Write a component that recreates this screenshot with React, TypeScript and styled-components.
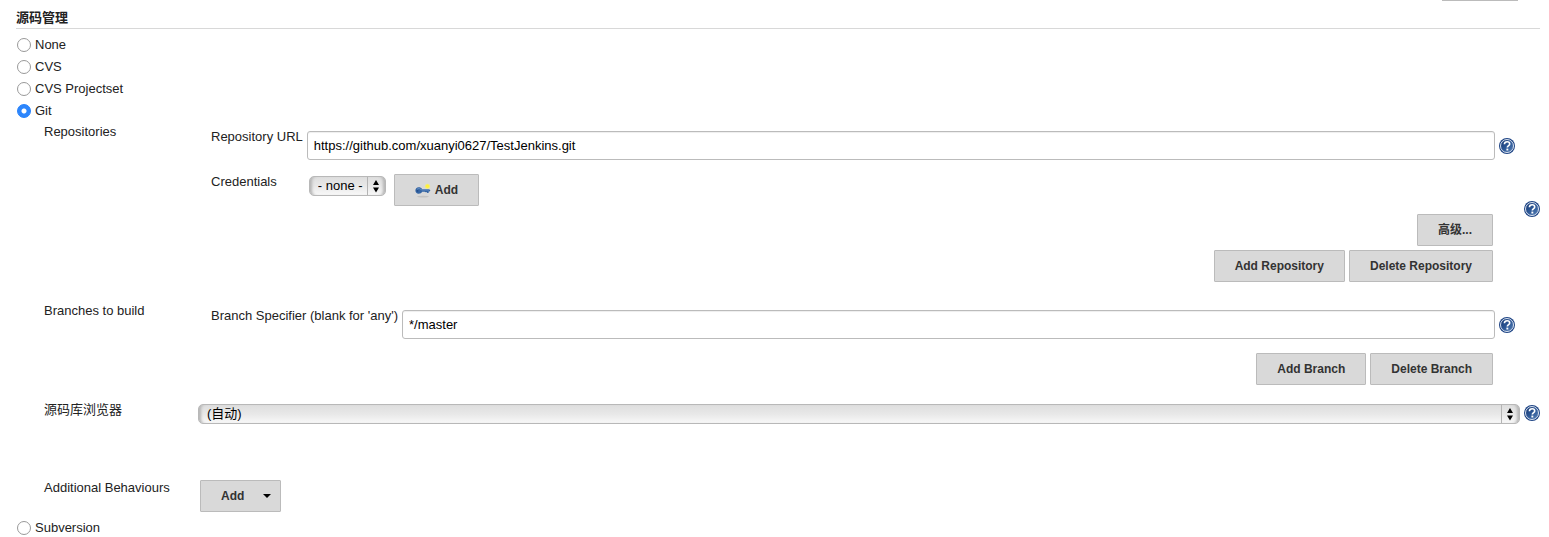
import React, { useId, useState } from "react";
import styled, { createGlobalStyle } from "styled-components";

const GlobalStyle = createGlobalStyle`
  *, *::before, *::after { box-sizing: border-box; }
  body {
    margin: 0;
    background: #fff;
    color: #222;
    font-family: "Liberation Sans", "Noto Sans CJK SC", sans-serif;
    font-size: 13px;
    line-height: 16px;
  }
  button, input, select { font: inherit; margin: 0; }
`;

const Page = styled.main`
  padding: 0 9px 0 16px;
`;

const PreviousSection = styled.div`
  display: flex;
  justify-content: flex-end;
  padding-right: 22px;
`;

const PreviousEdge = styled.div`
  width: 76px;
  height: 1px;
  background: #bbb;
`;

const SectionTitle = styled.h2`
  margin: 0 0 8px;
  padding: 9px 0 2px;
  border-bottom: 1px solid #d8d8d8;
  font-size: 13px;
  line-height: 16px;
  font-weight: 700;
`;

const RadioList = styled.div`
  display: flex;
  flex-direction: column;
  gap: 6px;
`;

const RadioRow = styled.label`
  display: flex;
  align-items: center;
  gap: 4px;
  height: 16px;
  padding-left: 1px;
`;

const Radio = styled.input`
  appearance: none;
  width: 14px;
  height: 14px;
  border: 1px solid #999;
  border-radius: 50%;
  background: #fff;
  &:checked {
    border-color: #2380fb;
    background: radial-gradient(circle, #fff 2px, #2d86fc 3px);
  }
`;

const Settings = styled.div`
  display: flex;
  flex-direction: column;
  padding: 5px 0 8px 28px;
`;

const Setting = styled.section<{ $space?: number }>`
  display: grid;
  grid-template-columns: 154px minmax(0, 1fr) 16px;
  margin-bottom: ${(p) => p.$space ?? 0}px;
`;

const SettingHelp = styled.div`
  grid-column: 3;
  align-self: center;
  display: flex;
`;

const Panel = styled.div<{ $bottom?: number }>`
  padding: 5px 9px ${(p) => p.$bottom ?? 0}px 13px;
`;

const Content = styled.div<{ $top?: number; $left?: number }>`
  padding: ${(p) => p.$top ?? 0}px 4px 0 ${(p) => p.$left ?? 0}px;
`;

const Fields = styled.div`
  display: grid;
  grid-template-columns: max-content minmax(0, 1fr) 16px;
  row-gap: 14px;
`;

const FieldLabel = styled.label`
  padding-right: 4px;
`;

const TextInput = styled.input`
  width: 100%;
  height: 29px;
  padding: 0 6px;
  border: 1px solid #bbb;
  border-radius: 3px;
  background: #fff;
  color: #000;
  box-shadow: inset 0 1px 1px #eee;
`;

const Control = styled.div`
  padding: 2px 4px 0 0;
`;

const FieldHelp = styled.div`
  display: flex;
  padding-top: 9px;
`;

const Inline = styled.div`
  display: flex;
  align-items: flex-start;
  gap: 8px;
  padding-left: 2px;
`;

const Buttons = styled.div<{ $top: number }>`
  display: flex;
  justify-content: flex-end;
  gap: 4px;
  padding: ${(p) => p.$top}px 22px 0 0;
`;

const Button = styled.button<{ $menu?: boolean }>`
  display: inline-flex;
  align-items: center;
  justify-content: center;
  gap: ${(p) => (p.$menu ? 19 : 4)}px;
  height: 32px;
  padding: 0 ${(p) => (p.$menu ? 9 : 20)}px 0 20px;
  border: 1px solid #bbb;
  border-radius: 1px;
  background: #d9d9d9;
  color: #333;
  font-size: 12px;
  font-weight: 700;
  white-space: nowrap;
`;

const SelectBox = styled.div<{ $fit?: boolean; $top: number }>`
  position: relative;
  width: ${(p) => (p.$fit ? "77px" : "auto")};
  margin-top: ${(p) => p.$top}px;
`;

const Select = styled.select`
  appearance: none;
  display: block;
  width: 100%;
  height: 20px;
  padding: 0 20px 0 8px;
  border: 1px solid #b8b8b8;
  border-radius: 5px;
  background: linear-gradient(#dedede, #e8e8e8 50%, #f8f8f8);
  box-shadow: inset 4px 0 3px -2px #b4b4b4, inset -4px 0 3px -2px #b4b4b4;
  color: #000;
`;

const SelectArrows = styled.svg`
  position: absolute;
  top: 1px;
  right: 0;
  pointer-events: none;
`;

function Choose({ id, options, fit, top }: { id: string; options: string[]; fit?: boolean; top: number }) {
  return (
    <SelectBox $fit={fit} $top={top}>
      <Select id={id}>
        {options.map((o) => (
          <option key={o}>{o}</option>
        ))}
      </Select>
      <SelectArrows width="19" height="18" viewBox="0 0 19 18" aria-hidden="true">
        <path d="M0.5 0V18" stroke="#b4b4b4" />
        <path d="M6 8L9 3L12 8ZM6 10.500L9 15.500L12 10.500Z" fill="#000" />
      </SelectArrows>
    </SelectBox>
  );
}

const HelpLink = styled.a`
  display: block;
  width: 16px;
  height: 16px;
`;

function Help() {
  const gradient = useId();
  return (
    <HelpLink href="#help" aria-label="Help">
      <svg width="16" height="16" viewBox="0 0 16 16" aria-hidden="true">
        <defs>
          <linearGradient id={gradient} x1="0" y1="0" x2="1" y2="1">
            <stop offset="0" stopColor="#16366f" />
            <stop offset="0.5" stopColor="#2c5796" />
            <stop offset="1" stopColor="#5b83b8" />
          </linearGradient>
        </defs>
        <circle cx="8" cy="8" r="8" fill="#1f4585" />
        <circle cx="8" cy="8" r="6.500" fill={`url(#${gradient})`} stroke="#eef3fa" strokeWidth="0.900" />
        <path d="M5.400 6.200C5.500 4.500 6.600 3.700 8.100 3.700C9.700 3.700 10.700 4.500 10.700 5.900C10.700 7.600 8.300 7.500 8.300 9.600" fill="none" stroke="#fff" strokeWidth="1.600" />
        <rect x="7.400" y="10.600" width="1.900" height="1.900" fill="#fff" />
      </svg>
    </HelpLink>
  );
}

function KeyIcon() {
  return (
    <svg width="16" height="16" viewBox="0 0 16 16" aria-hidden="true">
      <ellipse cx="8" cy="14.600" rx="6" ry="0.800" fill="#c2c2c2" />
      <circle cx="12.500" cy="4.300" r="2.600" fill="#efe98a" />
      <circle cx="12.500" cy="4.300" r="1.700" fill="#fff23c" />
      <path d="M3.600 5.300C5.200 5.300 6.500 5.900 7.200 7.200H14L15.400 8.300L14.600 9.600H13.600V11H12.300L11.500 9.900L10.600 10.300L9.800 9.700H7.200C6.600 11 5.300 11.700 3.600 11.700C1.700 11.700 0.400 10.300 0.400 8.500C0.400 6.700 1.700 5.300 3.600 5.300Z" fill="#3465a4" />
      <path d="M2 7.300C3 6.100 5.500 6.300 6.500 8H14" fill="none" stroke="#6d96c8" strokeWidth="0.800" />
      <circle cx="2.500" cy="8.800" r="0.900" fill="#204a87" />
    </svg>
  );
}

function App() {
  const [scm, setScm] = useState("Git");
  const option = (name: string) => (
    <RadioRow key={name}>
      <Radio type="radio" name="scm" value={name} checked={scm === name} onChange={() => setScm(name)} />
      {name}
    </RadioRow>
  );

  return (
    <>
      <GlobalStyle />
      <Page>
        <PreviousSection>
          <PreviousEdge />
        </PreviousSection>
        <SectionTitle>源码管理</SectionTitle>
        <RadioList>{["None", "CVS", "CVS Projectset", "Git"].map(option)}</RadioList>

        <Settings>
          <Setting $space={10}>
            <span>Repositories</span>
            <Panel $bottom={11}>
              <Fields>
                <FieldLabel htmlFor="url">Repository URL</FieldLabel>
                <Control>
                  <TextInput id="url" type="text" defaultValue="https://github.com/xuanyi0627/TestJenkins.git" />
                </Control>
                <FieldHelp>
                  <Help />
                </FieldHelp>
                <FieldLabel htmlFor="credentials">Credentials</FieldLabel>
                <Inline>
                  <Choose id="credentials" options={["- none -"]} fit top={2} />
                  <Button type="button">
                    <KeyIcon />
                    Add
                  </Button>
                </Inline>
              </Fields>
              <Buttons $top={8}>
                <Button type="button">高级...</Button>
              </Buttons>
              <Buttons $top={4}>
                <Button type="button">Add Repository</Button>
                <Button type="button">Delete Repository</Button>
              </Buttons>
            </Panel>
            <SettingHelp>
              <Help />
            </SettingHelp>
          </Setting>

          <Setting $space={17}>
            <span>Branches to build</span>
            <Panel>
              <Fields>
                <FieldLabel htmlFor="branch">Branch Specifier (blank for 'any')</FieldLabel>
                <Control>
                  <TextInput id="branch" type="text" defaultValue="*/master" />
                </Control>
                <FieldHelp>
                  <Help />
                </FieldHelp>
              </Fields>
              <Buttons $top={14}>
                <Button type="button">Add Branch</Button>
                <Button type="button">Delete Branch</Button>
              </Buttons>
            </Panel>
          </Setting>

          <Setting $space={56}>
            <label htmlFor="browser">源码库浏览器</label>
            <Content $top={2}>
              <Choose id="browser" options={["(自动)"]} top={0} />
            </Content>
            <SettingHelp>
              <Help />
            </SettingHelp>
          </Setting>

          <Setting>
            <span>Additional Behaviours</span>
            <Content $left={2}>
              <Button type="button" $menu>
                Add
                <svg width="8" height="4" viewBox="0 0 8 4" aria-hidden="true">
                  <path d="M0 0H8L4 4Z" fill="#000" />
                </svg>
              </Button>
            </Content>
          </Setting>
        </Settings>

        <RadioList>{option("Subversion")}</RadioList>
      </Page>
    </>
  );
}

export default App;
